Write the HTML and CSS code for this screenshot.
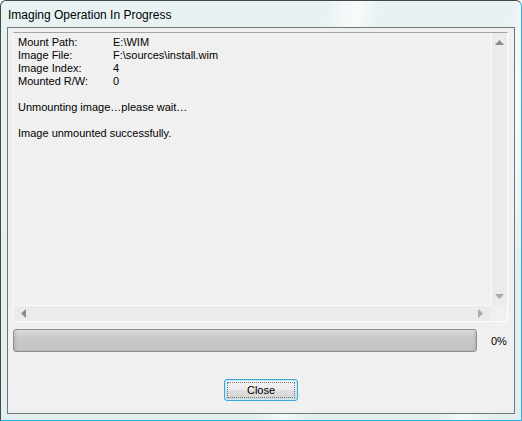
FILE: index.html
```html
<!DOCTYPE html>
<html>
<head>
<meta charset="utf-8">
<link rel="stylesheet" href="styles.css">
</head>
<body>
<div class="window">
  <div class="titlebar">Imaging Operation In Progress</div>
  <div class="client">
    <div class="textbox">
      <div class="text">
        <div class="row"><span class="label">Mount Path:</span><span>E:\WIM</span></div>
        <div class="row"><span class="label">Image File:</span><span>F:\sources\install.wim</span></div>
        <div class="row"><span class="label">Image Index:</span><span>4</span></div>
        <div class="row"><span class="label">Mounted R/W:</span><span>0</span></div>
        <div class="row blank"></div>
        <div class="row">Unmounting image…please wait…</div>
        <div class="row blank"></div>
        <div class="row">Image unmounted successfully.</div>
      </div>
      <div class="vscroll">
        <svg class="arrow" width="9" height="5" viewBox="0 0 9 5"><path d="M4.5 0 L9 5 L0 5 Z" fill="#8a8a8a"/></svg>
        <svg class="arrow" width="9" height="5" viewBox="0 0 9 5"><path d="M0 0 L9 0 L4.5 5 Z" fill="#a8a8a8"/></svg>
      </div>
      <div class="hscroll">
        <svg class="arrow" width="5" height="9" viewBox="0 0 5 9"><path d="M0 4.5 L5 0 L5 9 Z" fill="#8a8a8a"/></svg>
        <svg class="arrow" width="5" height="9" viewBox="0 0 5 9"><path d="M5 4.5 L0 0 L0 9 Z" fill="#a8a8a8"/></svg>
      </div>
      <div class="corner"></div>
    </div>
    <div class="progress-row">
      <div class="progress"></div>
      <div class="pct">0%</div>
    </div>
    <div class="buttons">
      <button class="btn"><span class="focus">Close</span></button>
    </div>
  </div>
</div>
</body>
</html>
```

FILE: styles.css
```css
html, body {
  margin: 0;
  padding: 0;
  background: #ffffff;
}
.window {
  width: 522px;
  height: 421px;
  box-sizing: border-box;
  border: 1px solid #3e4a4a;
  border-right-color: #22b4e6;
  border-bottom-color: #22b4e6;
  border-radius: 6px 6px 0 0;
  padding: 0 6px 6px 6px;
  display: flex;
  flex-direction: column;
  background:
    linear-gradient(100deg, rgba(255,255,255,0) 0, rgba(255,255,255,0) 55%, rgba(255,255,255,0.7) 60%, rgba(255,255,255,0) 64%, rgba(255,255,255,0) 86%, rgba(255,255,255,0.8) 90%, rgba(255,255,255,0) 95%),
    linear-gradient(180deg, #e9f2f3 0, #e2eeef 100%);
  font-family: "Liberation Sans", Arial, sans-serif;
}
.titlebar {
  height: 26px;
  line-height: 26px;
  padding-left: 1px;
  padding-top: 1px;
  box-sizing: border-box;
  font-size: 12px;
  color: #000;
}
.client {
  flex: 1;
  border: 1px solid #6f7777;
  background: #f0f0f0;
  padding: 4px 5px 0 5px;
  display: flex;
  flex-direction: column;
}
.textbox {
  height: 290px;
  box-sizing: border-box;
  border: 1px solid #dadada;
  border-top-color: #a3a3a3;
  border-left-color: #f8f8f8;
  border-right-color: #fdfdfd;
  border-bottom-color: #fdfdfd;
  margin-right: 1px;
  display: grid;
  grid-template-columns: 1fr 16px;
  grid-template-rows: 1fr 16px;
  background: #f0f0f0;
}
.text {
  padding: 3px 4px;
  font-size: 11px;
  line-height: 13px;
  color: #000;
}
.row {
  display: flex;
  height: 13px;
  white-space: nowrap;
}
.label {
  width: 95px;
}
.vscroll {
  background: #ebebeb;
  border-left: 1px solid #fbfbfb;
  display: flex;
  flex-direction: column;
  justify-content: space-between;
  align-items: center;
  padding: 7px 0 6px 0;
}
.hscroll {
  background: #ebebeb;
  border-top: 1px solid #fbfbfb;
  display: flex;
  justify-content: space-between;
  align-items: center;
  padding: 0 8px 0 7px;
}
.corner {
  background: #f0f0f0;
}
.arrow {
  display: block;
}
.progress-row {
  display: flex;
  align-items: center;
  margin-top: 7px;
}
.progress {
  width: 464px;
  height: 23px;
  box-sizing: border-box;
  border: 1px solid #8e8e8e;
  border-radius: 3px;
  background: linear-gradient(180deg, #e4e4e4 0, #d4d4d4 3px, #c8c8c8 40%, #c4c4c4 100%);
  box-shadow: inset 2px 0 2px rgba(0,0,0,0.08), inset -2px 0 2px rgba(0,0,0,0.08);
}
.pct {
  margin-left: 14px;
  font-size: 11px;
  color: #000;
}
.buttons {
  display: flex;
  justify-content: center;
  margin-top: 27px;
}
.btn {
  width: 74px;
  height: 22px;
  box-sizing: border-box;
  border: 1px solid #3aa6dc;
  border-radius: 3px;
  padding: 2px;
  background: linear-gradient(180deg, #f4f4f4 0, #ececec 48%, #dedede 52%, #d2d2d2 100%);
  box-shadow: inset 0 0 0 1px #c6ecfb;
  font-family: "Liberation Sans", Arial, sans-serif;
  font-size: 11px;
  color: #000;
  display: flex;
}
.focus {
  flex: 1;
  border: 1px dotted #777;
  display: flex;
  align-items: center;
  justify-content: center;
  line-height: 14px;
}
```
